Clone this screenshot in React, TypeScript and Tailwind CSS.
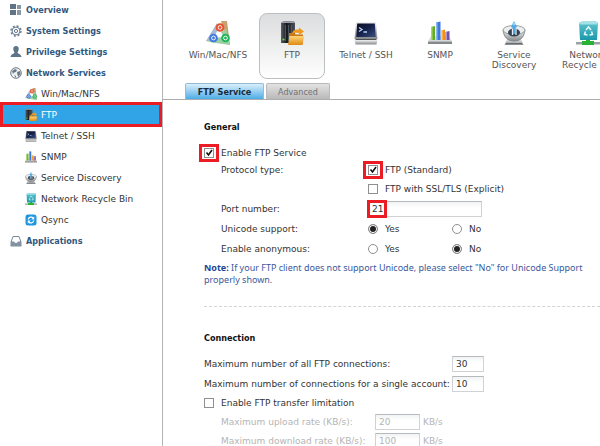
import type { ReactNode } from "react";

type Drawing = (props: { className: string }) => ReactNode;

function Gradients() {
  return (
    <svg className="absolute size-0" aria-hidden="true">
      <defs>
        <linearGradient id="folder" x2="0" y2="1">
          <stop stopColor="#ffd57a" />
          <stop offset="1" stopColor="#e08a12" />
        </linearGradient>
        <linearGradient id="server" x2="1">
          <stop stopColor="#5a6068" />
          <stop offset="0.4" stopColor="#15181d" />
          <stop offset="1" stopColor="#4d535a" />
        </linearGradient>
        <linearGradient id="silver" x2="0" y2="1">
          <stop stopColor="#f2f3f3" />
          <stop offset="1" stopColor="#85898c" />
        </linearGradient>
        <linearGradient id="screen" x2="1" y2="1">
          <stop stopColor="#080d20" />
          <stop offset="0.5" stopColor="#16224c" />
          <stop offset="1" stopColor="#3c4f83" />
        </linearGradient>
        <linearGradient id="teal" x2="0" y2="1">
          <stop stopColor="#5fc4ce" />
          <stop offset="1" stopColor="#1c98ab" />
        </linearGradient>
      </defs>
    </svg>
  );
}

const TriangleIcon: Drawing = ({ className }) => (
  <svg viewBox="0 0 24 24" className={className} aria-hidden="true">
    <path d="M15 0h6L24 24l-8-3 4-3z" fill="#c9a070" />
    <path d="M20 8l4 16L6 21.500 0 20z" fill="#9ccfa4" />
    <path d="M11 2L0 20h5l8-12z" fill="#aab9d3" />
    <path d="M13 8l5 8-11 1z" fill="#fff" />
    <circle cx="14" cy="6.500" r="4.300" fill="#e4512b" />
    <circle cx="7.500" cy="17" r="4.300" fill="#3f78dc" />
    <circle cx="19.500" cy="17" r="4.300" fill="#1fb457" />
    <g fill="none" stroke="#fff" strokeWidth="0.900">
      <circle cx="14" cy="6.500" r="1.900" />
      <circle cx="7.500" cy="17" r="1.900" />
      <circle cx="19.500" cy="17" r="1.900" />
    </g>
  </svg>
);

const FtpIcon: Drawing = ({ className }) => (
  <svg viewBox="0 0 24 24" className={className} aria-hidden="true">
    <path d="M1 2l2-1.500h11L15 2v20H1z" fill="url(#server)" />
    <path d="M1 2l2-1.500h11L15 2z" fill="#9aa0a6" />
    <path d="M5.500 4v16M8.500 4v16M11.500 4v14" stroke="#59616b" strokeWidth="0.800" />
    <path d="M2.500 18.500h2" stroke="#6ee13c" strokeWidth="1.600" />
    <path d="M9 12h5l1.500 1.500H23V23H9z" fill="#c87a12" />
    <path d="M9.500 15h14.500L22.500 24H8z" fill="url(#folder)" />
    <path d="M12 13c.5-4 3-5 7-4.500V6.500l5 4-5 3.800v-2.300c-3-.5-5-.3-7 1z" fill="#f29a1c" />
  </svg>
);

const TerminalIcon: Drawing = ({ className }) => (
  <svg viewBox="0 0 24 24" className={className} aria-hidden="true">
    <path d="M2 1h20l1.500 17H.5z" fill="url(#silver)" />
    <path d="M3.200 2.500h17.600l1 13.500H2.200z" fill="url(#screen)" />
    <path d="M.5 19h23l-1 4.500h-21z" fill="url(#silver)" />
    <path d="M1.500 18.500h21" stroke="#4d5052" />
    <path d="M5 6.500l3 2-3 2M9.500 11H13" fill="none" stroke="#b8d3f5" strokeWidth="1.300" />
  </svg>
);

const ChartIcon: Drawing = ({ className }) => (
  <svg viewBox="0 0 24 24" className={className} aria-hidden="true">
    <path d="M3 15h18l3 5.500H0z" fill="#d6d9db" />
    <path d="M0 20.500h24V23H0z" fill="#83888b" />
    <path d="M3 6l4-1v14H3z" fill="#63ad26" />
    <path d="M3 6l1.500-.4V19H3z" fill="#a4dc63" />
    <path d="M8 1.500L12.500.5V19H8z" fill="#3f78dd" />
    <path d="M8 1.500l1.500-.4V19H8z" fill="#8eb6f5" />
    <path d="M13 9.500l4-1V19h-4z" fill="#f0921d" />
    <path d="M13 9.500l1.500-.4V19H13z" fill="#ffcf6c" />
    <path d="M17.500 11l4-1v9h-4z" fill="#7254a5" />
    <path d="M17.500 11l1.500-.4V19h-1.500z" fill="#b39ad6" />
  </svg>
);

const DishIcon: Drawing = ({ className }) => (
  <svg viewBox="0 0 24 24" className={className} aria-hidden="true">
    <path d="M5 18h14l2.500 6h-19z" fill="url(#silver)" />
    <path d="M4 22.500h16" stroke="#686c6f" />
    <path d="M1 9c1 8 5 11 11 11s10-3 11-11z" fill="url(#silver)" stroke="#777b7e" strokeWidth="0.800" />
    <ellipse cx="12" cy="9" rx="11" ry="4.500" fill="#eceeef" stroke="#85898c" strokeWidth="0.800" />
    <ellipse cx="12" cy="11.500" rx="6" ry="4" fill="#33414f" />
    <path d="M10.500 8v6M14 8v6" stroke="#e5edf2" strokeWidth="1.300" />
    <path d="M12 0l3 6-2 1v6h-2V7L9 6z" fill="#4ba7e6" />
    <circle cx="12" cy="3" r="1.500" fill="#91d3fa" />
  </svg>
);

const BinIcon: Drawing = ({ className }) => (
  <svg viewBox="0 0 24 24" className={className} aria-hidden="true">
    <path d="M0 21h24v2.500H0z" fill="#9ba1a4" />
    <path d="M10 18h4v2h4v4H6v-4h4z" fill="#28b236" />
    <path d="M3 2l3-1.500h14L22 2l-1 17H4z" fill="url(#teal)" />
    <path d="M3 2l3-1.500h14L22 2l-1 1.500H4z" fill="#a5e2e7" />
    <g fill="none" stroke="#e9fbfc" strokeWidth="1.500">
      <path d="M10 9l2.500-3L15 9" />
      <path d="M15.500 10.500l1 3-3 .5" />
      <path d="M11.500 14L8.500 13.500l1-3" />
    </g>
  </svg>
);

const QsyncIcon: Drawing = ({ className }) => (
  <svg viewBox="0 0 24 24" className={className} aria-hidden="true">
    <rect x="1" y="1" width="22" height="22" rx="5" fill="#1f97e0" />
    <path d="M6.500 11a5.800 5.800 0 0110-3M17.500 13a5.800 5.800 0 01-10 3" fill="none" stroke="#fff" strokeWidth="2.600" />
    <path d="M18.500 5v6h-6zM5.500 19v-6h6z" fill="#fff" />
  </svg>
);

const OverviewIcon: Drawing = ({ className }) => (
  <svg viewBox="0 0 12 12" className={className} aria-hidden="true">
    <path d="M0 0h6v5H0zM0 6h6v5H0z" fill="#5f7487" />
    <path d="M7 1h4v4H7zM7 6h4v5H7z" fill="#8798a7" />
  </svg>
);

const GearIcon: Drawing = ({ className }) => (
  <svg viewBox="0 0 12 12" className={className} aria-hidden="true" fill="none" stroke="#667b8d">
    <circle cx="6" cy="6" r="5" strokeWidth="1.400" strokeDasharray="2 1.927" />
    <circle cx="6" cy="6" r="3.900" strokeWidth="1" />
    <circle cx="6" cy="6" r="1.600" strokeWidth="1" />
  </svg>
);

const PersonIcon: Drawing = ({ className }) => (
  <svg viewBox="0 0 12 12" className={className} aria-hidden="true">
    <path d="M6 0c2 0 3 1.300 2.700 3.200C8.500 5 7.800 5.800 7.500 6.500c0 1.200 3.700 1.500 4 4.500H.5c.3-3 4-3.300 4-4.500-.3-.7-1-1.500-1.200-3.300C3 1.300 4 0 6 0z" fill="#5f7487" />
  </svg>
);

const GlobeIcon: Drawing = ({ className }) => (
  <svg viewBox="0 0 12 12" className={className} aria-hidden="true">
    <circle cx="6" cy="6" r="5.300" fill="#eef1f3" stroke="#6c7a86" />
    <path d="M2 4l3-2 2 1-1 2-2 .5L3 7zM7 5l3-1 .5 3-2 3-1-2zM4 8l2 1v2z" fill="#6c7a86" />
  </svg>
);

const TrayIcon: Drawing = ({ className }) => (
  <svg viewBox="0 0 12 12" className={className} aria-hidden="true">
    <path d="M3 1.500h6L11 7H8l-.7 1.500H4.700L4 7H1z" fill="#fff" stroke="#77889a" />
    <path d="M.5 7H4l.7 1.500h2.600L8 7h3.500v4.500H.5z" fill="#8292a2" />
  </svg>
);

const sections: { name: string; icon: Drawing; children?: { name: string; icon: Drawing }[] }[] = [
  { name: "Overview", icon: OverviewIcon },
  { name: "System Settings", icon: GearIcon },
  { name: "Privilege Settings", icon: PersonIcon },
  {
    name: "Network Services",
    icon: GlobeIcon,
    children: [
      { name: "Win/Mac/NFS", icon: TriangleIcon },
      { name: "FTP", icon: FtpIcon },
      { name: "Telnet / SSH", icon: TerminalIcon },
      { name: "SNMP", icon: ChartIcon },
      { name: "Service Discovery", icon: DishIcon },
      { name: "Network Recycle Bin", icon: BinIcon },
      { name: "Qsync", icon: QsyncIcon },
    ],
  },
  { name: "Applications", icon: TrayIcon },
];

const services = [
  { name: "Win/Mac/NFS", icon: TriangleIcon },
  { name: "FTP", icon: FtpIcon },
  { name: "Telnet / SSH", icon: TerminalIcon },
  { name: "SNMP", icon: ChartIcon },
  { name: "Service Discovery", icon: DishIcon },
  { name: "Network Recycle Bin", icon: BinIcon },
];

function Sidebar() {
  return (
    <nav className="w-[163px] shrink-0 border-r border-[#b4b4b4]">
      <ul className="-mt-px">
        {sections.map(({ name, icon: Icon, children }) => (
          <li key={name}>
            <a
              href="#"
              className="flex h-[21px] items-center gap-1 pl-2.5 font-['DejaVu_Sans_Condensed',Tahoma,sans-serif] font-bold text-[#31587f]"
            >
              <Icon className="size-3" />
              {name}
            </a>
            {children && (
              <ul>
                {children.map(({ name: child, icon: ChildIcon }) => (
                  <li key={child} className="relative">
                    <a
                      href="#"
                      className={`flex h-[21px] items-center gap-1 pl-[25px] ${child === "FTP" ? "bg-[#31a4e8] text-white" : ""}`}
                    >
                      <ChildIcon className="size-3" />
                      {child}
                    </a>
                    {child === "FTP" && (
                      <span className="pointer-events-none absolute inset-x-0 -inset-y-0.5 z-10 border-3 border-[#ec1c24]" />
                    )}
                  </li>
                ))}
              </ul>
            )}
          </li>
        ))}
      </ul>
    </nav>
  );
}

function Mark({ on, children }: { on?: boolean; children: ReactNode }) {
  return (
    <span className="relative flex">
      {children}
      {on && <span className="pointer-events-none absolute -inset-x-[5px] -inset-y-1 border-3 border-[#ec1c24]" />}
    </span>
  );
}

function Check({ id, label, checked }: { id: string; label: string; checked?: boolean }) {
  return (
    <div className="flex items-center gap-[7px]">
      <Mark on={checked}>
        <input
          id={id}
          type="checkbox"
          defaultChecked={checked}
          className="peer size-2.5 appearance-none border border-[#8e8f8f] bg-white"
        />
        <svg
          viewBox="0 0 10 10"
          className="pointer-events-none absolute inset-0 hidden size-2.5 peer-checked:block"
          aria-hidden="true"
        >
          <path d="M2.500 4.500l2 2.500 3.500-5" fill="none" stroke="#111" strokeWidth="1.600" />
        </svg>
      </Mark>
      <label htmlFor={id}>{label}</label>
    </div>
  );
}

function Radio({ id, group, label, checked }: { id: string; group: string; label: string; checked?: boolean }) {
  return (
    <div className="flex w-[84px] items-center gap-[7px]">
      <input
        id={id}
        type="radio"
        name={group}
        defaultChecked={checked}
        className="size-2.5 appearance-none rounded-full border border-[#8e8f8f] bg-white checked:bg-[#222] checked:shadow-[inset_0_0_0_1px_#fff]"
      />
      <label htmlFor={id}>{label}</label>
    </div>
  );
}

const box = "h-4 border border-[#cfd3d5] border-t-[#b5babc] bg-linear-to-b from-[#f1f3f4] to-white to-40% px-[3px]";

function YesNo({ label, group, value }: { label: string; group: string; value: "yes" | "no" }) {
  return (
    <div role="radiogroup" aria-label={label} className="flex h-5 items-center pl-[17px]">
      <span className="w-[147px]">{label}</span>
      <Radio id={`${group}-yes`} group={group} label="Yes" checked={value === "yes"} />
      <Radio id={`${group}-no`} group={group} label="No" checked={value === "no"} />
    </div>
  );
}

export default function App() {
  return (
    <div className="flex h-screen overflow-hidden bg-white font-['DejaVu_Sans',Verdana,sans-serif] text-[9px] leading-3 whitespace-nowrap text-[#333]">
      <Gradients />
      <Sidebar />
      <main className="min-w-0 flex-1 overflow-hidden">
        <div className="flex gap-2 pt-[13px] pl-[22px]">
          {services.map(({ name, icon: Icon }) => (
            <button
              key={name}
              type="button"
              className={`flex h-[66px] w-[66px] shrink-0 flex-col items-center gap-[5px] rounded-lg border pt-[7px] leading-[10px] text-[#555] ${
                name === "FTP" ? "border-[#bcbfc1] bg-linear-to-b from-[#dcddde] to-white" : "border-transparent"
              }`}
            >
              <Icon className="size-6 shrink-0" />
              <span className={name.length > 12 ? "w-16 whitespace-normal" : ""}>{name}</span>
            </button>
          ))}
        </div>

        <div
          role="tablist"
          className="mt-1 flex h-[17px] gap-0.5 border-b border-[#adadad] pl-[22px] font-['DejaVu_Sans_Condensed',Tahoma,sans-serif]"
        >
          <button
            type="button"
            role="tab"
            aria-selected="true"
            className="w-[79px] rounded-t-xs border border-b-0 border-[#94bcd3] bg-linear-to-b from-[#d9effb] to-[#49ace6] font-bold text-[#182c3b]"
          >
            FTP Service
          </button>
          <button
            type="button"
            role="tab"
            aria-selected="false"
            className="w-16 rounded-t-xs border border-b-0 border-[#b9b9b9] bg-linear-to-b from-[#e3e3e3] to-[#b9b9b9] text-[#707070]"
          >
            Advanced
          </button>
        </div>

        <form className="pl-[41px]">
          <section className="border-b border-dashed border-[#d4d4d4] pb-5">
            <h2 className="pt-[21px] font-['DejaVu_Sans_Condensed',Tahoma,sans-serif] font-bold text-[#111]">General</h2>
            <div className="mt-3 flex h-4 items-center">
              <Check id="enable" label="Enable FTP Service" checked />
            </div>
            <div className="flex pl-[17px]">
              <span className="w-[147px] pt-[3px]">Protocol type:</span>
              <div>
                <div className="flex h-[18px] items-center">
                  <Check id="standard" label="FTP (Standard)" checked />
                </div>
                <div className="flex h-5 items-center">
                  <Check id="tls" label="FTP with SSL/TLS (Explicit)" />
                </div>
              </div>
            </div>
            <div className="flex h-5 items-center pl-[17px]">
              <label htmlFor="port" className="w-[147px]">
                Port number:
              </label>
              <span className="relative flex">
                <input id="port" defaultValue="21" className={`${box} w-[114px]`} />
                <span className="pointer-events-none absolute -inset-y-px -left-px w-5 border-3 border-[#ec1c24]" />
              </span>
            </div>
            <YesNo label="Unicode support:" group="unicode" value="yes" />
            <YesNo label="Enable anonymous:" group="anonymous" value="no" />
            <p className="mt-[3px] font-['Noto_Sans',Verdana,sans-serif] text-[#3a5a9c]">
              <b className="text-[#1d4596]">Note:</b> If your FTP client does not support Unicode, please select "No" for Unicode Support
              <br />
              properly shown.
            </p>
          </section>

          <section>
            <h2 className="pt-[25px] font-['DejaVu_Sans_Condensed',Tahoma,sans-serif] font-bold text-[#111]">Connection</h2>
            <div className="mt-2.5 flex h-5 items-center">
              <label htmlFor="total" className="w-[248px]">
                Maximum number of all FTP connections:
              </label>
              <input id="total" defaultValue="30" className={`${box} w-8`} />
            </div>
            <div className="flex h-5 items-center">
              <label htmlFor="single" className="w-[248px]">
                Maximum number of connections for a single account:
              </label>
              <input id="single" defaultValue="10" className={`${box} w-8`} />
            </div>
            <div className="flex h-[18px] items-center">
              <Check id="limit" label="Enable FTP transfer limitation" />
            </div>
            <div className="flex h-[19px] items-center pl-[17px] text-[#b5b5b5]">
              <label htmlFor="upload" className="w-[154px]">
                Maximum upload rate (KB/s):
              </label>
              <input id="upload" disabled defaultValue="20" className={`${box} mr-[3px] w-[45px]`} />
              KB/s
            </div>
            <div className="flex h-[19px] items-center pl-[17px] text-[#b5b5b5]">
              <label htmlFor="download" className="w-[154px]">
                Maximum download rate (KB/s):
              </label>
              <input id="download" disabled defaultValue="100" className={`${box} mr-[3px] w-[45px]`} />
              KB/s
            </div>
          </section>
        </form>
      </main>
    </div>
  );
}
